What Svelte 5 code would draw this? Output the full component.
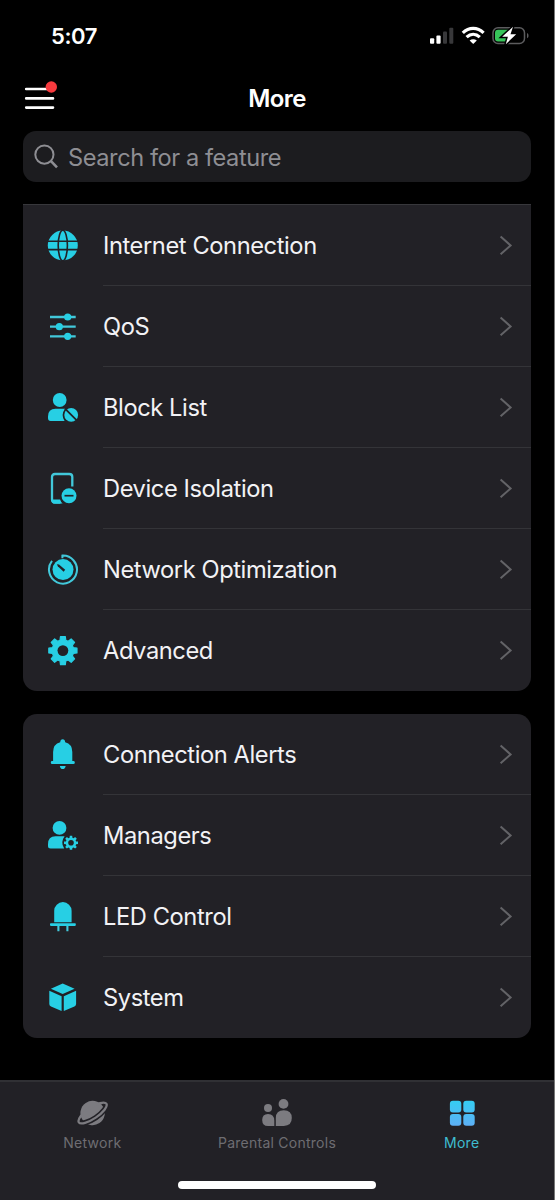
<script lang="ts">
    type Item = { label: string; icon: string };

    const groups: Item[][] = [
        [
            { label: "Internet Connection", icon: "globe" },
            { label: "QoS", icon: "sliders" },
            { label: "Block List", icon: "block" },
            { label: "Device Isolation", icon: "device" },
            { label: "Network Optimization", icon: "gauge" },
            { label: "Advanced", icon: "gear" },
        ],
        [
            { label: "Connection Alerts", icon: "bell" },
            { label: "Managers", icon: "manager" },
            { label: "LED Control", icon: "led" },
            { label: "System", icon: "cube" },
        ],
    ];

    const tabs: Item[] = [
        { label: "Network", icon: "planet" },
        { label: "Parental Controls", icon: "family" },
        { label: "More", icon: "grid" },
    ];

    let active = "More";

    // Eight-toothed cog outline around (cx, cy)
    function cog(cx: number, cy: number, outer: number, inner: number) {
        const points: string[] = [];
        for (let i = 0; i < 8; i++) {
            const a = (i * Math.PI) / 4;
            for (const [off, r] of [
                [-0.27, inner],
                [-0.17, outer],
                [0.17, outer],
                [0.27, inner],
            ]) {
                const x = cx + r * Math.sin(a + off);
                const y = cy - r * Math.cos(a + off);
                points.push(`${x.toFixed(2)} ${y.toFixed(2)}`);
            }
        }
        return `M${points.join("L")}Z`;
    }
</script>

<div class="screen">
    <div class="status">
        <span class="time">5:07</span>
        <svg class="indicators" width="102" height="20" viewBox="0 0 102 20">
            <rect x="1" y="12.3" width="4.2" height="5.5" rx="1" fill="#fff" />
            <rect x="7.4" y="9.4" width="4.2" height="8.4" rx="1" fill="#fff" />
            <rect x="14" y="5.6" width="4" height="12.2" rx="1" fill="#38383a" />
            <rect x="20.3" y="1.8" width="4" height="16" rx="1" fill="#38383a" />
            <g fill="none" stroke="#fff" stroke-width="3.2">
                <path d="M33.8 6.8C40 .8 48.4 .8 54.6 6.8" />
                <path d="M37.6 11.2C41.6 7.4 46.8 7.4 50.8 11.2" />
            </g>
            <path d="M44.2 18.1L40.6 14.4C42.7 12.7 45.7 12.7 47.8 14.4Z" fill="#fff" />
            <rect x="64" y="1.7" width="31.5" height="15.8" rx="5" fill="none" stroke="#5c5c5e" stroke-width="1.5" />
            <path d="M98 7C100 7.8 100 11.5 98 12.2Z" fill="#5c5c5e" />
            <path d="M69 3.7H80V15.5H69Q66 15.5 66 12.5V6.7Q66 3.7 69 3.7Z" fill="#36c459" />
            <path d="M84 .8L73.2 10.8H78.9L76.8 18.2L87.2 8.2H81.5Z" fill="#fff" stroke="#000" stroke-width="3" paint-order="stroke" />
        </svg>
    </div>

    <header>
        <button class="menu" aria-label="Menu">
            <svg width="34" height="30" viewBox="0 0 34 30">
                <path d="M2.2 8H29M2.2 17.4H29M2.2 26.6H29" stroke="#fff" stroke-width="2.6" stroke-linecap="round" />
                <circle cx="27.3" cy="6" r="5.7" fill="#f73a3e" />
            </svg>
        </button>
        <h1>More</h1>
    </header>

    <div class="search">
        <svg width="26" height="26" viewBox="0 0 26 26" fill="none" stroke="#8e8e93">
            <circle cx="10.4" cy="10.6" r="9.1" stroke-width="2" />
            <path d="M17 17.2L23 23.4" stroke-width="2.6" />
        </svg>
        <span>Search for a feature</span>
    </div>

    <main>
        {#each groups as group, g}
            <section class:cut={g === 0}>
                {#each group as item}
                    <div class="row">
                        <svg class="icon" width="33" height="33" viewBox="0 0 33 33">
                            {#if item.icon === "globe"}
                                <circle cx="16.8" cy="16.5" r="15" />
                                <g fill="none" stroke="#222126" stroke-width="1.6">
                                    <ellipse cx="16.8" cy="16.5" rx="4.6" ry="15.2" />
                                    <path d="M1 12.3H33M1 20.6H33" />
                                </g>
                            {:else if item.icon === "sliders"}
                                <path class="line" d="M4 7H29.7M4 16.7H29.7M4 26.3H29.7" stroke-width="2.3" />
                                <circle cx="21.7" cy="7" r="3.6" />
                                <circle cx="13.3" cy="16.7" r="3.6" />
                                <circle cx="21.7" cy="26.3" r="3.6" />
                            {:else if item.icon === "block"}
                                <circle cx="13.7" cy="9" r="6.9" />
                                <path d="M2 27V25.5Q2 17.8 9.5 17.8H19Q14.5 24 18.6 29.9H4.6Q2 29.9 2 27Z" />
                                <circle cx="25.2" cy="23.9" r="6.9" />
                                <path d="M19 17.7L31 29.7" stroke="#222126" stroke-width="1.8" />
                            {:else if item.icon === "device"}
                                <path class="line" d="M14.5 30.5H9Q6 30.5 6 27.5V5Q6 2 9 2H23.3Q26.3 2 26.3 5V14.6" stroke-width="2.3" />
                                <path d="M5.4 27.4H14.1Q14.8 29.8 16.6 31.6H9Q5.6 31.6 5.4 27.4Z" />
                                <circle cx="23" cy="23.7" r="7.5" />
                                <path d="M18.5 23.7H27.5" stroke="#222126" stroke-width="1.7" />
                            {:else if item.icon === "gauge"}
                                <circle cx="17" cy="16.6" r="10.5" />
                                <path class="line" d="M16.4 5.2V2.6A14 14 0 1 1 6 7.9" stroke-width="2" />
                                <path d="M10.9 11.2L13 11.6L19.2 16.8L17.6 18.7L11.8 13.2Z" fill="#222126" />
                            {:else if item.icon === "gear"}
                                <path class="round" d={cog(16.9, 16.6, 14.3, 10.8)} />
                                <circle cx="16.9" cy="16.6" r="5.4" fill="#222126" />
                            {:else if item.icon === "bell"}
                                <path d="M16.7 1.2Q19 1.2 19.2 4.2Q26.3 6 26.3 14V23.2H7.1V14Q7.1 6 14.2 4.2Q14.4 1.2 16.7 1.2Z" />
                                <rect x="4.8" y="23" width="24" height="3.1" rx="1.4" />
                                <path d="M13.8 28H19.7Q19.2 31.1 16.7 31.1Q14.3 31.1 13.8 28Z" />
                            {:else if item.icon === "manager"}
                                <circle cx="13.5" cy="8.9" r="6.9" />
                                <path d="M2 27V25.3Q2 17.3 9.5 17.3H18.6Q14 23.5 18.2 29.5H4.6Q2 29.5 2 27Z" />
                                <path d={cog(25, 23.8, 7.1, 5.3)} />
                                <circle cx="25" cy="23.8" r="2.8" fill="#222126" />
                            {:else if item.icon === "led"}
                                <path d="M8.2 22.3V10.8A8.7 8.7 0 0 1 25.6 10.8V22.3Z" />
                                <rect x="4" y="23.3" width="25.8" height="2.6" rx="0.8" />
                                <path class="line" d="M12.4 25.9V31.2M21.4 25.9V31.2" stroke-width="2.1" />
                            {:else if item.icon === "cube"}
                                <path d="M16.7 2.6L28.6 7.7L16.7 12.9L4.9 7.7Z" />
                                <path d="M3.3 9.7L15.6 15.2V30L5 25.5Q3.3 24.8 3.3 23Z" />
                                <path d="M30.1 9.7L17.8 15.2V30L28.4 25.5Q30.1 24.8 30.1 23Z" />
                            {/if}
                        </svg>
                        <div class="body">
                            <span>{item.label}</span>
                            <svg width="14" height="21" viewBox="0 0 14 21">
                                <path d="M1.6 1.6L11.6 10.4L1.6 19.2" fill="none" stroke="#636367" stroke-width="2" />
                            </svg>
                        </div>
                    </div>
                {/each}
            </section>
        {/each}
    </main>

    <footer>
        <nav>
            {#each tabs as tab}
                <button class="tab" class:active={tab.label === active} on:click={() => (active = tab.label)}>
                    <svg width="34" height="30" viewBox="0 0 34 30" fill="#7c7b80">
                        {#if tab.icon === "planet"}
                            <g transform="translate(17.6 14) rotate(-34)">
                                <circle r="12.2" />
                                <path d="M-16.2 0A16.2 5.6 0 0 0 16.2 0" fill="none" stroke="#222126" stroke-width="5.4" />
                                <ellipse rx="16.6" ry="5.6" fill="none" stroke="#7c7b80" stroke-width="2.3" />
                            </g>
                        {:else if tab.icon === "family"}
                            <circle cx="8" cy="9" r="4" />
                            <circle cx="23.5" cy="4.9" r="4.9" />
                            <path d="M8 15Q14.3 15 14.3 21.7V27H8Q2.2 27 2.2 21T8 15Z" />
                            <path d="M23.8 11.3Q31.8 11.3 31.8 19.1T23.8 27H15.8V19.1Q15.8 11.3 23.8 11.3Z" />
                        {:else}
                            <defs>
                                <linearGradient id="tiles" gradientUnits="userSpaceOnUse" x1="0" y1="2" x2="0" y2="27">
                                    <stop offset="0" stop-color="#35cdf2" />
                                    <stop offset="1" stop-color="#5eaff5" />
                                </linearGradient>
                            </defs>
                            <g fill="url(#tiles)">
                                <rect x="4.9" y="1.8" width="11.4" height="11.6" rx="3" />
                                <rect x="18.3" y="1.8" width="11.4" height="11.6" rx="3" />
                                <rect x="4.9" y="15.1" width="11.4" height="11.6" rx="3" />
                                <rect x="18.3" y="15.1" width="11.4" height="11.6" rx="3" />
                            </g>
                        {/if}
                    </svg>
                    <span>{tab.label}</span>
                </button>
            {/each}
        </nav>
        <div class="home"></div>
    </footer>
</div>

<style>
    :global(body) {
        background: #000;
    }

    .screen {
        box-sizing: border-box;
        width: 555px;
        height: 1200px;
        display: flex;
        flex-direction: column;
        overflow: hidden;
        background: #000;
        border-right: 1px solid #777;
        color: #f2f2f5;
        font-family: Inter, "Liberation Sans", sans-serif;
    }

    svg {
        display: block;
        flex: none;
    }

    button {
        padding: 0;
        border: 0;
        background: none;
        font: inherit;
    }

    .status {
        display: flex;
        align-items: center;
        justify-content: space-between;
        height: 71px;
        padding: 0 23px 0 51px;
    }

    .time {
        color: #fff;
        font-size: 22px;
        font-weight: 600;
        letter-spacing: -0.4px;
    }

    header {
        display: grid;
        grid-template-columns: 1fr auto 1fr;
        align-items: center;
        height: 55px;
        padding: 0 24px;
    }

    .menu {
        width: 34px;
        height: 35px;
        padding-bottom: 5px;
    }

    h1 {
        margin: 0;
        color: #fff;
        font-size: 24px;
        font-weight: 600;
        letter-spacing: -0.6px;
    }

    .search {
        display: flex;
        align-items: center;
        gap: 8px;
        height: 51px;
        margin: 5px 23px 22px;
        padding: 1px 0 0 11px;
        box-sizing: border-box;
        border-radius: 13px;
        background: #1c1c1f;
        color: #8e8e93;
        font-size: 23.6px;
        letter-spacing: -0.43px;
    }

    main {
        display: flex;
        flex-direction: column;
        gap: 23px;
        padding: 0 23px;
    }

    section {
        border-radius: 14px;
        background: #222126;
    }

    section.cut {
        border-top: 1px solid #37373b;
        border-radius: 0 0 14px 14px;
    }

    .row {
        display: flex;
        align-items: center;
        height: 81px;
        padding-left: 23px;
    }

    .icon {
        margin-right: 24px;
        fill: #27cfe4;
    }

    .line {
        fill: none;
        stroke: #42c8da;
    }

    .round {
        stroke: #27cfe4;
        stroke-width: 1.2;
        stroke-linejoin: round;
    }

    .body {
        display: flex;
        flex: 1;
        align-items: center;
        justify-content: space-between;
        height: 80px;
        padding-right: 18px;
        border-bottom: 1px solid #343438;
        font-size: 23.7px;
        letter-spacing: -0.42px;
    }

    .row:last-child .body {
        border-color: transparent;
    }

    footer {
        display: flex;
        flex-direction: column;
        align-items: center;
        height: 120px;
        margin-top: auto;
        box-sizing: border-box;
        border-top: 2px solid #303034;
        background: #222126;
    }

    nav {
        display: flex;
        width: 100%;
        height: 99px;
    }

    .tab {
        display: flex;
        flex: 1;
        flex-direction: column;
        align-items: center;
        padding-top: 17px;
        gap: 5px;
        color: #6e6d72;
        font-size: 14px;
        line-height: 18px;
        letter-spacing: 0.25px;
    }

    .tab.active {
        color: #3fbdd0;
    }

    .home {
        width: 198px;
        height: 8px;
        border-radius: 4px;
        background: #fff;
    }
</style>
